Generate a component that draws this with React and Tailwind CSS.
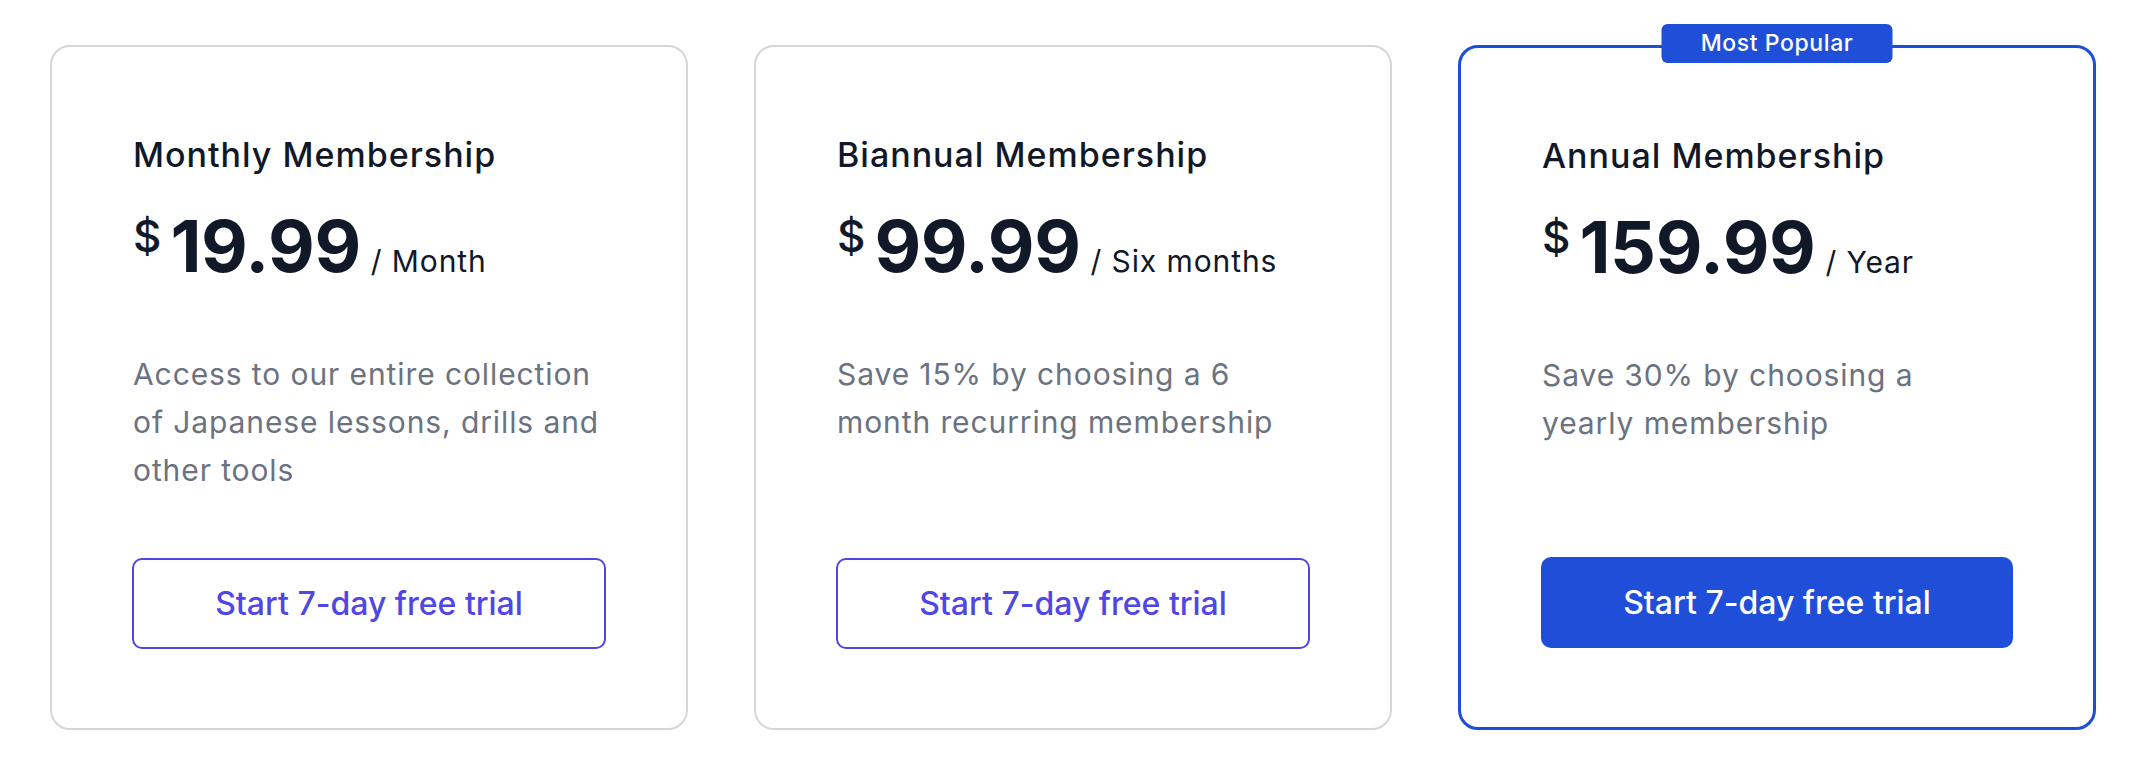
import React from "react";

const plans = [
  {
    name: "Monthly Membership",
    price: "19.99",
    unit: "/ Month",
    blurb: ["Access to our entire collection", "of Japanese lessons, drills and", "other tools"],
  },
  {
    name: "Biannual Membership",
    price: "99.99",
    unit: "/ Six months",
    blurb: ["Save 15% by choosing a 6", "month recurring membership"],
  },
  {
    name: "Annual Membership",
    price: "159.99",
    unit: "/ Year",
    blurb: ["Save 30% by choosing a", "yearly membership"],
    popular: true,
  },
];

const PlanCard = ({ plan }) => {
  return (
    <div
      className={`relative flex flex-col rounded-[20px] bg-white px-[80px] pt-[88px] pb-[79px] ${
        plan.popular ? "border-[3px] border-[#1d4ed8]" : "border-2 border-[#d4d6db]"
      }`}
    >
      {plan.popular && (
        <div className="absolute left-1/2 top-[-24px] flex h-[39px] w-[231px] -translate-x-1/2 items-center justify-center rounded-[6px] bg-[#1f4fd8] text-[23px] font-medium tracking-[0.6px] text-white">
          Most Popular
        </div>
      )}

      <h3 className="ml-[1px] text-[34px] font-medium leading-[40px] tracking-[1px] text-[#111827]">
        {plan.name}
      </h3>

      {/* price row: $ sits at the top, amount and unit share a baseline */}
      <div className="ml-[1px] mt-[35px] flex items-baseline text-[#111827]">
        <span className="mt-[4px] self-start text-[44px] font-medium leading-none">$</span>
        <span className="ml-[9px] text-[72px] font-bold leading-none tracking-[-0.4px]">
          {plan.price}
        </span>
        <span className="ml-[10px] text-[30px] leading-none tracking-[0.9px]">{plan.unit}</span>
      </div>

      <p className="ml-[1px] mt-[68px] flex-1 text-[30px] leading-[48px] tracking-[0.9px] text-[#6b7280]">
        {plan.blurb.map((line, i) => (
          <React.Fragment key={i}>
            {i > 0 && <br />}
            {line}
          </React.Fragment>
        ))}
      </p>

      <button
        className={`mt-[64px] h-[91px] w-full rounded-[10px] text-[32px] font-medium ${
          plan.popular
            ? "bg-[#1f4fd8] text-white"
            : "border-2 border-[#4f46e5] bg-white text-[#4f46e5]"
        }`}
      >
        Start 7-day free trial
      </button>
    </div>
  );
};

export default function App() {
  return (
    <div className="min-h-[768px] bg-white pt-[45px]" style={{ fontFamily: "Inter, 'Noto Sans', sans-serif" }}>
      <div className="ml-[50px] grid w-[2046px] grid-cols-3 gap-[66px]">
        {plans.map((plan) => (
          <PlanCard key={plan.name} plan={plan} />
        ))}
      </div>
    </div>
  );
}
